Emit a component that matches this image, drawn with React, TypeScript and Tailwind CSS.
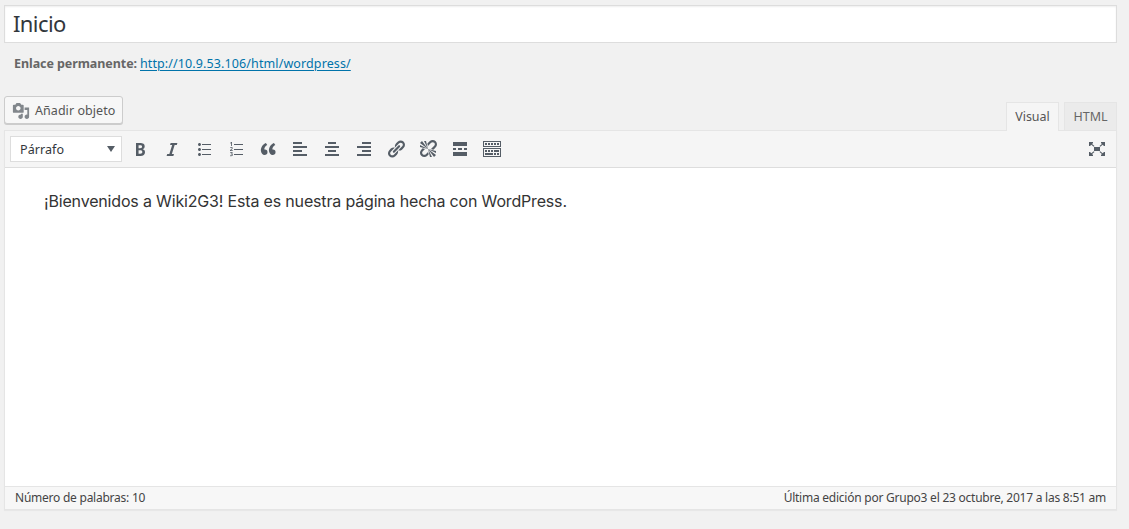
const icons = {
  bold: 'M6 4v13h4.54c1.37 0 2.46-.33 3.26-1 .8-.66 1.2-1.58 1.2-2.77 0-.84-.17-1.51-.51-2.01s-.9-.85-1.67-1.03v-.09c.57-.1 1.02-.4 1.36-.9s.51-1.13.51-1.91c0-1.14-.39-1.98-1.17-2.5C12.75 4.26 11.5 4 9.78 4H6zm2.57 5.15V6.26h1.36c.73 0 1.27.11 1.61.32.34.22.51.58.51 1.07 0 .54-.16.92-.47 1.15s-.82.35-1.51.35h-1.5zm0 2.19h1.6c1.44 0 2.16.53 2.16 1.61 0 .6-.17 1.05-.51 1.34s-.86.43-1.57.43H8.57v-3.38z',
  italic: 'M14.78 6h-2.13l-2.8 9h2.12l-.62 2H4.6l.62-2h2.14l2.8-9H8.03l.62-2h6.75z',
  ul: 'M5.5 7C4.67 7 4 6.33 4 5.5 4 4.68 4.67 4 5.5 4 6.32 4 7 4.68 7 5.5 7 6.33 6.32 7 5.5 7zM8 5h9v1H8V5zm-2.5 7c-.83 0-1.5-.67-1.5-1.5C4 9.68 4.67 9 5.5 9c.82 0 1.5.68 1.5 1.5 0 .83-.68 1.5-1.5 1.5zM8 10h9v1H8v-1zm-2.5 7c-.83 0-1.5-.67-1.5-1.5 0-.82.67-1.5 1.5-1.5.82 0 1.5.68 1.5 1.5 0 .83-.68 1.5-1.5 1.5zM8 15h9v1H8v-1z',
  ol: 'M6 7V3h-.69L4.02 4.03l.4.5.46-.37c.05-.04.15-.14.3-.28l-.02.47V7H6zm2-2h9v1H8V5zm-1.23 6.95v-.7H5.05v-.04l.51-.48c.33-.31.57-.54.7-.71.14-.17.24-.33.3-.49.07-.16.1-.33.1-.51 0-.21-.05-.4-.16-.56-.1-.16-.25-.28-.44-.37s-.41-.14-.65-.14c-.19 0-.36.02-.51.06-.15.03-.29.09-.42.15-.12.07-.29.19-.48.35l.45.54c.16-.13.31-.23.45-.3.15-.07.3-.1.45-.1.14 0 .26.03.35.11s.13.2.13.36c0 .1-.02.2-.06.3s-.1.21-.19.33c-.09.11-.29.32-.58.62l-.99 1v.58h2.76zM8 10h9v1H8v-1zm-1.29 3.95c0-.3-.12-.54-.37-.71-.24-.17-.58-.26-1-.26-.52 0-.96.13-1.33.4l.4.6c.17-.11.32-.19.46-.23.14-.05.27-.07.41-.07.38 0 .58.15.58.46 0 .2-.07.35-.22.43s-.38.12-.7.12h-.31v.66h.31c.34 0 .59.04.75.12.15.08.23.22.23.41 0 .22-.07.37-.2.47-.14.1-.35.15-.63.15-.19 0-.38-.03-.57-.08s-.36-.12-.52-.2v.74c.34.15.74.22 1.18.22.53 0 .94-.11 1.22-.33.29-.22.43-.52.43-.92 0-.27-.09-.48-.26-.64s-.42-.26-.74-.3v-.02c.27-.06.49-.19.65-.37.15-.18.23-.39.23-.65zM8 15h9v1H8v-1z',
  quote: 'M9.49 13.22c0-.74-.2-1.38-.61-1.9-.62-.78-1.83-.88-2.53-.72-.29-1.65 1.11-3.75 2.92-4.65L7.88 4c-2.73 1.3-5.42 4.28-4.96 8.05C3.21 14.43 4.59 16 6.54 16c.85 0 1.56-.25 2.12-.75s.83-1.18.83-2.03zm8.05 0c0-.74-.2-1.38-.61-1.9-.63-.78-1.83-.88-2.53-.72-.29-1.65 1.11-3.75 2.92-4.65L15.93 4c-2.73 1.3-5.41 4.28-4.95 8.05.29 2.38 1.66 3.95 3.61 3.95.85 0 1.56-.25 2.12-.75s.83-1.18.83-2.03z',
  left: 'M12 5V3H3v2h9zm5 4V7H3v2h14zm-5 4v-2H3v2h9zm5 4v-2H3v2h14z',
  center: 'M14 5V3H6v2h8zm3 4V7H3v2h14zm-3 4v-2H6v2h8zm3 4v-2H3v2h14z',
  right: 'M17 5V3H8v2h9zm0 4V7H3v2h14zm0 4v-2H8v2h9zm0 4v-2H3v2h14z',
  link: 'M17.74 2.76c1.68 1.69 1.68 4.41 0 6.1l-1.53 1.52c-1.12 1.12-2.7 1.47-4.14 1.09l2.62-2.61.76-.77.76-.76c.84-.84.84-2.2 0-3.04-.84-.85-2.2-.85-3.04 0l-.77.76-3.38 3.38c-.37-1.44-.02-3.02 1.1-4.14l1.52-1.53c1.69-1.68 4.42-1.68 6.1 0zM8.59 13.43l5.34-5.34c.42-.42.42-1.1 0-1.52-.44-.43-1.13-.39-1.53 0l-5.33 5.34c-.42.42-.42 1.1 0 1.52.44.43 1.13.39 1.52 0zm-.76 2.29l4.14-4.15c.38 1.44.03 3.02-1.09 4.14l-1.52 1.53c-1.69 1.68-4.41 1.68-6.1 0-1.68-1.68-1.68-4.42 0-6.1l1.53-1.52c1.12-1.12 2.7-1.47 4.14-1.1l-4.14 4.15c-.85.84-.85 2.2 0 3.05.84.84 2.2.84 3.04 0z',
  unlink: 'M17.74 2.26c1.68 1.69 1.68 4.41 0 6.1l-1.53 1.52c-.32.33-.69.58-1.08.77L13 10l1.69-1.64.76-.77.76-.76c.84-.84.84-2.2 0-3.04-.84-.85-2.2-.85-3.04 0l-.77.76-.76.76L10 7l-.65-2.14c.19-.38.44-.75.77-1.07l1.52-1.53c1.69-1.68 4.42-1.68 6.1 0zM2 4l8 6-6-8zm4-2l4 8-2-8H6zM2 6l8 4-8-2V6zm7.36 7.69L10 13l.74 2.35-1.38 1.39c-1.69 1.68-4.41 1.68-6.1 0-1.68-1.68-1.68-4.42 0-6.1l1.39-1.38L7 10l-.69.64-1.52 1.53c-.85.84-.85 2.2 0 3.04.84.85 2.2.85 3.04 0zM18 16l-8-6 6 8zm-4 2l-4-8 2 8h2zm4-4l-8-4 8 2v2z',
  more: 'M17 7V3H3v4h14zM6 11V9H3v2h3zm6 0V9H8v2h4zm5 0V9h-3v2h3zm0 6v-4H3v4h14z',
  toolbar: 'M19 2v6H1V2h18zm-1 5V3H2v4h16zM5 4v2H3V4h2zm3 0v2H6V4h2zm3 0v2H9V4h2zm3 0v2h-2V4h2zm3 0v2h-2V4h2zm2 5v9H1V9h18zm-1 8v-7H2v7h16zM5 11v2H3v-2h2zm3 0v2H6v-2h2zm3 0v2H9v-2h2zm6 0v2h-5v-2h5zm-6 3v2H3v-2h8zm3 0v2h-2v-2h2zm3 0v2h-2v-2h2z',
  media: 'M13 11V4c0-.55-.45-1-1-1h-1.67L9 1H5L3.67 3H2c-.55 0-1 .45-1 1v7c0 .55.45 1 1 1h10c.55 0 1-.45 1-1zM7 4.5c1.38 0 2.5 1.12 2.5 2.5S8.38 9.5 7 9.5 4.5 8.38 4.5 7 5.62 4.5 7 4.5zM14 6h5v10.5c0 1.38-1.12 2.5-2.5 2.5S14 17.88 14 16.5s1.12-2.5 2.5-2.5c.17 0 .34.02.5.05V9h-3V6zm-4 8.05V13h2v3.5c0 1.38-1.12 2.5-2.5 2.5S7 17.88 7 16.5 8.12 14 9.5 14c.17 0 .34.02.5.05z',
  expand: 'M7 8h6v4H7zM2 3h4v1L5.1 4.9l2.4 2.2-.7.7-2.5-2.1L3 7H2zM18 3v4h-1l-1.3-1.3-2.5 2.1-.7-.7 2.4-2.2L14 4V3zM2 17v-4h1l1.3 1.3 2.5-2.1.7.7-2.4 2.2L6 16v1zM18 17h-4v-1l.9-.9-2.4-2.2.7-.7 2.5 2.1L17 13h1z',
};

type IconName = keyof typeof icons;

function Icon({ name, className = 'size-5' }: { name: IconName; className?: string }) {
  return (
    <svg viewBox="0 0 20 20" fill="currentColor" className={`shrink-0 ${className}`} aria-hidden="true">
      <path d={icons[name]} />
    </svg>
  );
}

const tools: IconName[] = ['bold', 'italic', 'ul', 'ol', 'quote', 'left', 'center', 'right', 'link', 'unlink', 'more', 'toolbar'];

export default function App() {
  return (
    <div className="h-[529px] w-[1129px] overflow-hidden bg-[#f1f1f1] pt-[5px] pr-3 pl-1 font-['Noto_Sans',sans-serif] text-[13px] text-[#444]">
      <div className="flex h-[38px] items-center border border-[#ddd] bg-white pb-px pl-2 text-[22px] tracking-[-0.6px] text-[#32373c] shadow-[inset_0_1px_2px_rgba(0,0,0,0.07)]">
        Inicio
      </div>
      <div className="mt-[11px] flex h-5 items-center pl-2.5 text-[12.5px] text-[#666]">
        <strong className="mr-[3px] tracking-[-0.07px] whitespace-nowrap">Enlace permanente:</strong>
        <a href="#" className="tracking-[0.11px] whitespace-nowrap text-[#0073aa] underline underline-offset-2">http://10.9.53.106/html/wordpress/</a>
      </div>

      <div className="mt-[22px] flex h-[34px] items-start justify-between">
        <button className="flex h-7 w-[119px] items-center rounded-[3px] border border-[#ccc] bg-[#f7f7f7] pl-[7px] text-[12.5px] whitespace-nowrap text-[#555] shadow-[0_1px_0_#ccc]">
          <Icon name="media" className="mt-0.5 mr-[5px] size-[18px] text-[#82878c]" />
          <span className="pt-0.5 tracking-[0.05px]">Añadir objeto</span>
        </button>
        <div className="flex gap-[5px] pt-1.5 text-[12.5px] text-[#555]">
          <button className="z-10 flex h-[29px] w-[53px] items-center justify-center border border-b-0 border-[#e5e5e5] bg-[#f5f5f5]">Visual</button>
          <button className="flex h-7 w-[53px] items-center justify-center border border-b-0 border-[#e5e5e5] bg-[#ebebeb] pt-px text-[#666]">HTML</button>
        </div>
      </div>

      <div className="flex h-[380px] flex-col border border-[#e5e5e5] shadow-[0_1px_1px_rgba(0,0,0,0.04)]">
        <div className="flex h-[37px] shrink-0 items-center border-b border-[#ddd] bg-[#f5f5f5] pr-[9px] pl-[5px] text-[#555d66]">
          <div className="flex h-[26px] w-28 items-center justify-between border border-[#ddd] bg-white pr-1.5 pl-[9px] text-[12.5px] text-[#32373c]">
            <span className="pt-[3px] tracking-[0.08px]">Párrafo</span>
            <svg viewBox="0 0 8 6" className="h-1.5 w-2 fill-[#555d66]" aria-hidden="true"><path d="M0 0h8L4 6z" /></svg>
          </div>
          <div className="ml-2 flex gap-3">
            {tools.map((name) => <Icon key={name} name={name} />)}
          </div>
          <Icon name="expand" className="ml-auto size-5" />
        </div>
        <div className="min-h-0 flex-1 bg-white px-[39px] pt-5 font-['Inter','Liberation_Sans',sans-serif] text-base leading-[27px] tracking-[-0.17px] text-[#333]">
          <p className="whitespace-nowrap">¡Bienvenidos a Wiki2G3! Esta es nuestra página hecha con WordPress.</p>
        </div>
        <div className="flex h-[23px] shrink-0 items-center justify-between border-t border-[#e5e5e5] bg-[#f7f7f7] px-2.5 text-[12px] tracking-[-0.24px] whitespace-nowrap">
          <span>Número de palabras: 10</span>
          <span>Última edición por Grupo3 el 23 octubre, 2017 a las 8:51 am</span>
        </div>
      </div>
    </div>
  );
}
